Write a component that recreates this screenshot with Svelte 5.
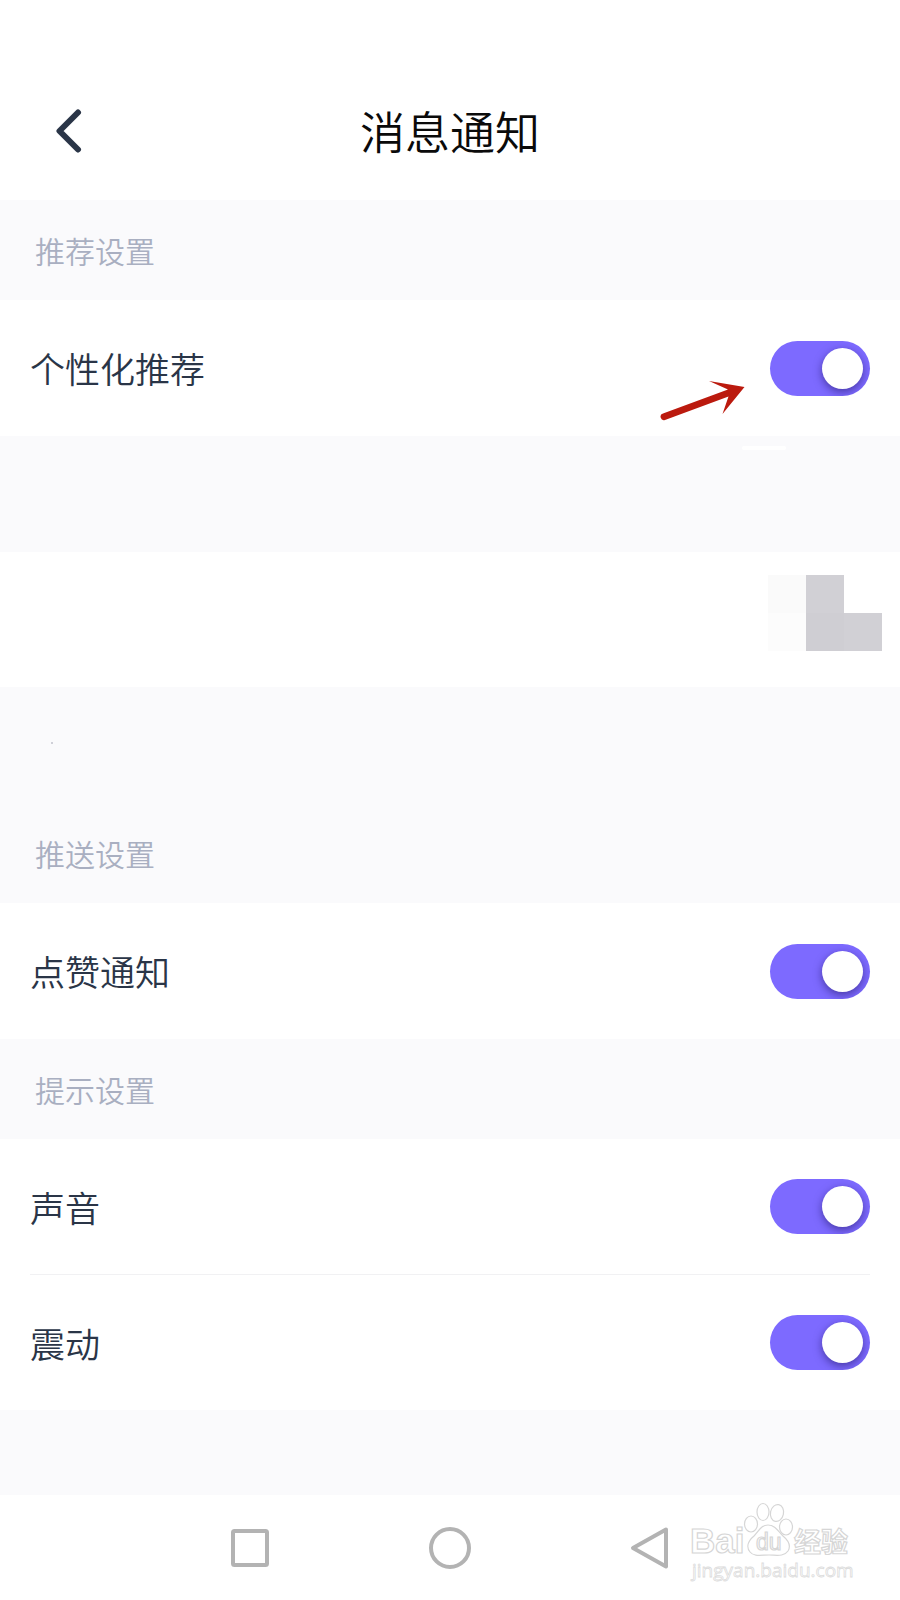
<script>
    let sections = $state([
        {
            title: "推荐设置",
            items: [{ id: "recommend", label: "个性化推荐", on: true, pointed: true }],
        },
        {
            title: "推送设置",
            spaced: true,
            items: [{ id: "like", label: "点赞通知", on: true }],
        },
        {
            title: "提示设置",
            items: [
                { id: "sound", label: "声音", on: true },
                { id: "vibrate", label: "震动", on: true },
            ],
        },
    ]);
</script>

<div class="page">
    <header class="header">
        <button class="back" aria-label="返回">
            <svg width="26" height="44" viewBox="0 0 26 44">
                <path d="M22 3.5L3.5 22L22 40.5" />
            </svg>
        </button>
        <h1>消息通知</h1>
    </header>

    <main>
        {#each sections as section}
            {#if section.spaced}
                <div class="gap">
                    <span class="smudge"></span>
                </div>
                <div class="hidden-row">
                    <div class="mosaic">
                        <span class="faint"></span>
                        <span class="dark"></span>
                        <span></span>
                        <span class="fainter"></span>
                        <span class="darker"></span>
                        <span class="dark"></span>
                    </div>
                </div>
                <div class="gap">
                    <span class="speck"></span>
                </div>
            {/if}
            <section>
                <h2>{section.title}</h2>
                <div class="group">
                    {#each section.items as item}
                        <div class="row">
                            <label for={item.id}>{item.label}</label>
                            <input
                                class="switch"
                                type="checkbox"
                                role="switch"
                                id={item.id}
                                bind:checked={item.on}
                            />
                            {#if item.pointed}
                                <svg class="arrow" width="86" height="42" viewBox="0 0 86 42">
                                    <path
                                        d="M3 33.5L68 9.5L49 1L84.5 7L62.5 34L68.5 16.5L5 40A3.4 3.4 0 0 1 3 33.5Z"
                                    />
                                </svg>
                            {/if}
                        </div>
                    {/each}
                </div>
            </section>
        {/each}
    </main>

    <nav class="navbar">
        <button aria-label="最近任务">
            <svg width="44" height="44" viewBox="0 0 44 44">
                <rect x="5" y="5" width="34" height="34" rx="1.5" />
            </svg>
        </button>
        <button aria-label="主屏幕">
            <svg width="44" height="44" viewBox="0 0 44 44">
                <circle cx="22" cy="22" r="19" />
            </svg>
        </button>
        <button aria-label="返回上一页">
            <svg width="44" height="44" viewBox="0 0 44 44">
                <path d="M38 3.5L5 22L38 40.5Z" />
            </svg>
        </button>
        <svg class="watermark" width="180" height="92" viewBox="0 0 180 92">
            <g class="outline">
                <text class="latin" x="8" y="53">Bai</text>
                <ellipse cx="69" cy="24" rx="6.5" ry="8" />
                <ellipse cx="81" cy="12" rx="6" ry="8.5" />
                <ellipse cx="95" cy="13" rx="6.5" ry="8.5" transform="rotate(12 95 13)" />
                <ellipse cx="104" cy="27" rx="6.5" ry="8" />
                <path
                    d="M86 25C93 25 96 31 101 36C107 41 109 46 106 51C102 57 94 55 87 55C79 55 72 57 68 52C64 47 66 41 72 36C77 31 79 25 86 25Z"
                />
                <text class="du" x="74" y="50">du</text>
                <text class="cjk" x="112" y="52">经验</text>
            </g>
            <text class="site" x="10" y="77">jingyan.baidu.com</text>
        </svg>
    </nav>
</div>

<style>
    :global(body) {
        margin: 0;
        background: #fafafc;
    }

    .page {
        min-height: 100vh;
        display: flex;
        flex-direction: column;
        background: #fafafc;
        font-family: "Noto Sans CJK SC", sans-serif;
        font-weight: 350;
        color: #2a3547;
    }

    button {
        display: flex;
        padding: 0;
        border: none;
        background: none;
        cursor: pointer;
    }

    svg {
        fill: none;
    }

    .header {
        display: grid;
        grid-template-columns: 1fr auto 1fr;
        align-items: center;
        height: 138px;
        padding: 62px 56px 0;
        background: #fff;
    }

    .back {
        justify-self: start;
    }

    .back path {
        stroke: #2a3547;
        stroke-width: 6;
        stroke-linecap: round;
        stroke-linejoin: round;
    }

    h1 {
        margin: 0;
        font-size: 45px;
        line-height: 60px;
        font-weight: inherit;
        color: #0a0a0a;
    }

    h2 {
        margin: 0;
        padding: 0 35px;
        font-size: 30px;
        line-height: 100px;
        font-weight: inherit;
        color: #a9afc1;
    }

    .group {
        background: #fff;
    }

    .row {
        position: relative;
        display: flex;
        align-items: center;
        justify-content: space-between;
        height: 135px;
        margin: 0 30px;
    }

    .row:only-child {
        height: 136px;
    }

    .row + .row {
        border-top: 1px solid #f1f1f3;
    }

    .row label {
        font-size: 35px;
        line-height: 48px;
    }

    .switch {
        appearance: none;
        flex: none;
        width: 100px;
        height: 55px;
        margin: 0;
        padding: 7px;
        box-sizing: border-box;
        border-radius: 28px;
        background: #ccccd4;
        overflow: hidden;
        cursor: pointer;
    }

    .switch::before {
        content: "";
        display: block;
        width: 41px;
        height: 41px;
        border-radius: 50%;
        background: #fff;
        box-shadow: 0 3px 8px rgba(20, 10, 80, 0.5);
    }

    .switch:checked {
        background: #7d6aff;
    }

    .switch:checked::before {
        margin-left: 45px;
    }

    /* sits over the row, just left of the switch */
    .arrow {
        position: absolute;
        right: 124px;
        top: 80px;
        fill: #bb1a0e;
    }

    .gap {
        display: flex;
        align-items: flex-start;
        height: 116px;
    }

    .smudge {
        width: 44px;
        height: 4px;
        margin: 10px 114px 0 auto;
        border-radius: 2px;
        background: #fff;
    }

    .speck {
        width: 2px;
        height: 2px;
        margin: 55px 0 0 51px;
        background: #cfd0d8;
    }

    .hidden-row {
        display: flex;
        justify-content: flex-end;
        height: 112px;
        padding: 23px 18px 0;
        background: #fff;
    }

    .mosaic {
        display: grid;
        grid-template-columns: repeat(3, 38px);
        grid-template-rows: repeat(2, 38px);
    }

    .faint {
        background: #fafafa;
    }

    .fainter {
        background: #fcfcfc;
    }

    .dark {
        background: #d1d0d5;
    }

    .darker {
        background: #cfced3;
    }

    .navbar {
        position: relative;
        display: grid;
        grid-template-columns: repeat(3, 1fr);
        place-items: center;
        height: 105px;
        margin-top: auto;
        padding: 0 calc(100% / 6);
        background: #fff;
    }

    .navbar button svg {
        stroke: #b3b3b3;
        stroke-width: 4;
        stroke-linejoin: round;
    }

    .watermark {
        position: absolute;
        right: 38px;
        top: 5px;
    }

    .outline {
        fill: #fff;
        stroke: #d6d6d6;
        stroke-width: 1.2;
    }

    .latin {
        font: bold 35px "Liberation Sans", sans-serif;
    }

    .du {
        font: 23px "Liberation Sans", sans-serif;
    }

    .cjk {
        font: bold 27px "Noto Sans CJK SC", sans-serif;
    }

    .site {
        font: 19px "Open Sans", sans-serif;
        fill: #fff;
        stroke: #dcdcdc;
        stroke-width: 0.8;
    }
</style>
